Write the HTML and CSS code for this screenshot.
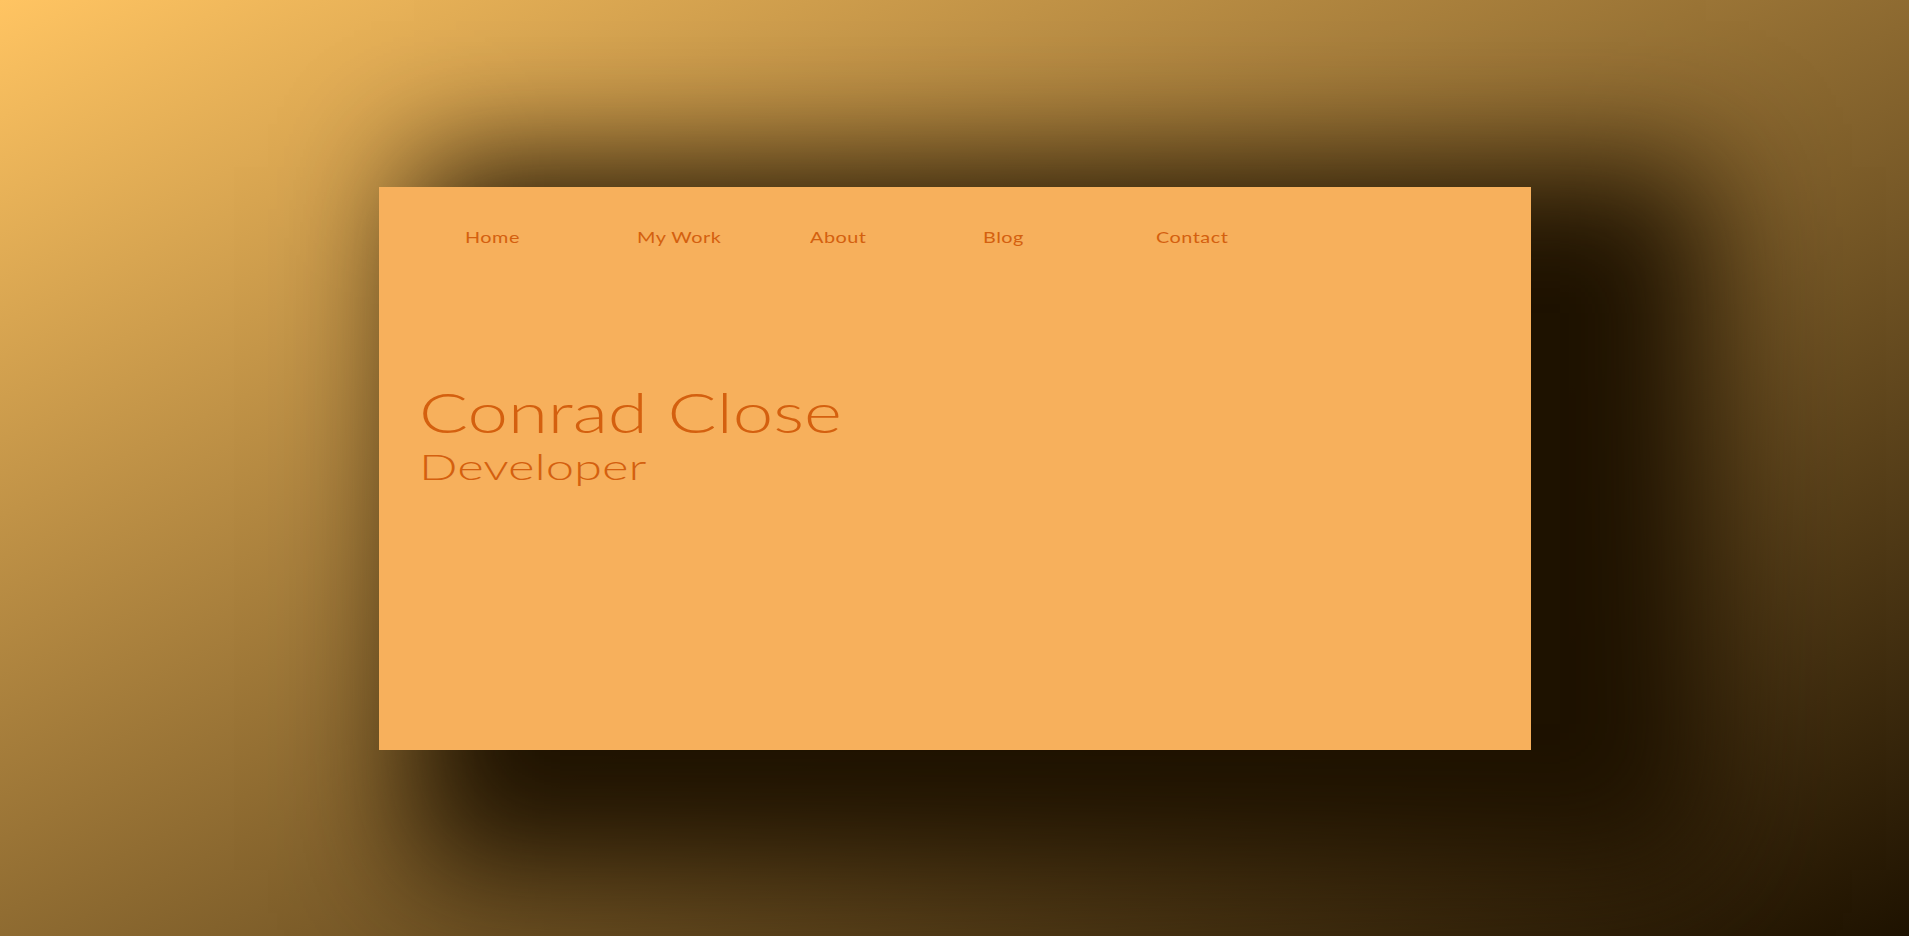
FILE: index.html
```html
<!DOCTYPE html>
<html lang="en">
<head>
<meta charset="utf-8">
<title>Conrad Close</title>
<link rel="stylesheet" href="styles.css">
</head>
<body>
  <main class="card">
    <nav class="nav">
      <ul class="nav-list">
        <li class="nav-item"><a class="nav-link" href="#">Home</a></li>
        <li class="nav-item"><a class="nav-link" href="#">My Work</a></li>
        <li class="nav-item"><a class="nav-link" href="#">About</a></li>
        <li class="nav-item"><a class="nav-link" href="#">Blog</a></li>
        <li class="nav-item"><a class="nav-link" href="#">Contact</a></li>
      </ul>
    </nav>
    <header class="hero">
      <h1 class="hero-name"><span class="wide">Conrad Close</span></h1>
      <h2 class="hero-role"><span class="wide wide-role">Developer</span></h2>
    </header>
  </main>
</body>
</html>
```
FILE: styles.css
```css
html, body {
  margin: 0;
  padding: 0;
  height: 100%;
}

body {
  background: linear-gradient(to bottom right, #ffc462 0%, #1e1200 100%);
  display: flex;
  align-items: center;
  justify-content: center;
  font-family: "Lato", "Liberation Sans", sans-serif;
  font-weight: 300;
  color: #d4600f;
  overflow: hidden;
}

.card {
  width: 1152px;
  height: 563px;
  background: #f7b05c;
  box-shadow: 105px 50px 120px 70px #1e1200;
  box-sizing: border-box;
  padding: 40px 40px 0 40px;
}

.nav-list {
  list-style: none;
  margin: 0;
  padding: 0 0 0 46px;
  display: flex;
}

.nav-item {
  width: 172.8px;
  flex: none;
  line-height: 20px;
  font-size: 15px;
  font-weight: 400;
}

.nav-link {
  color: #d4600f;
  text-decoration: none;
  display: inline-block;
  letter-spacing: 0.4px;
  transform: scaleX(1.32);
  transform-origin: left center;
}

.hero {
  margin-top: 132px;
}

.hero-name {
  margin: 0;
  font-size: 55px;
  font-weight: 300;
  line-height: 1.2;
}

.hero-role {
  margin: 0;
  font-size: 36px;
  font-weight: 300;
  line-height: 1.2;
}

.wide {
  display: inline-block;
  transform: scaleX(1.32);
  transform-origin: left center;
}

.wide-role {
  transform: scaleX(1.41);
}
```
